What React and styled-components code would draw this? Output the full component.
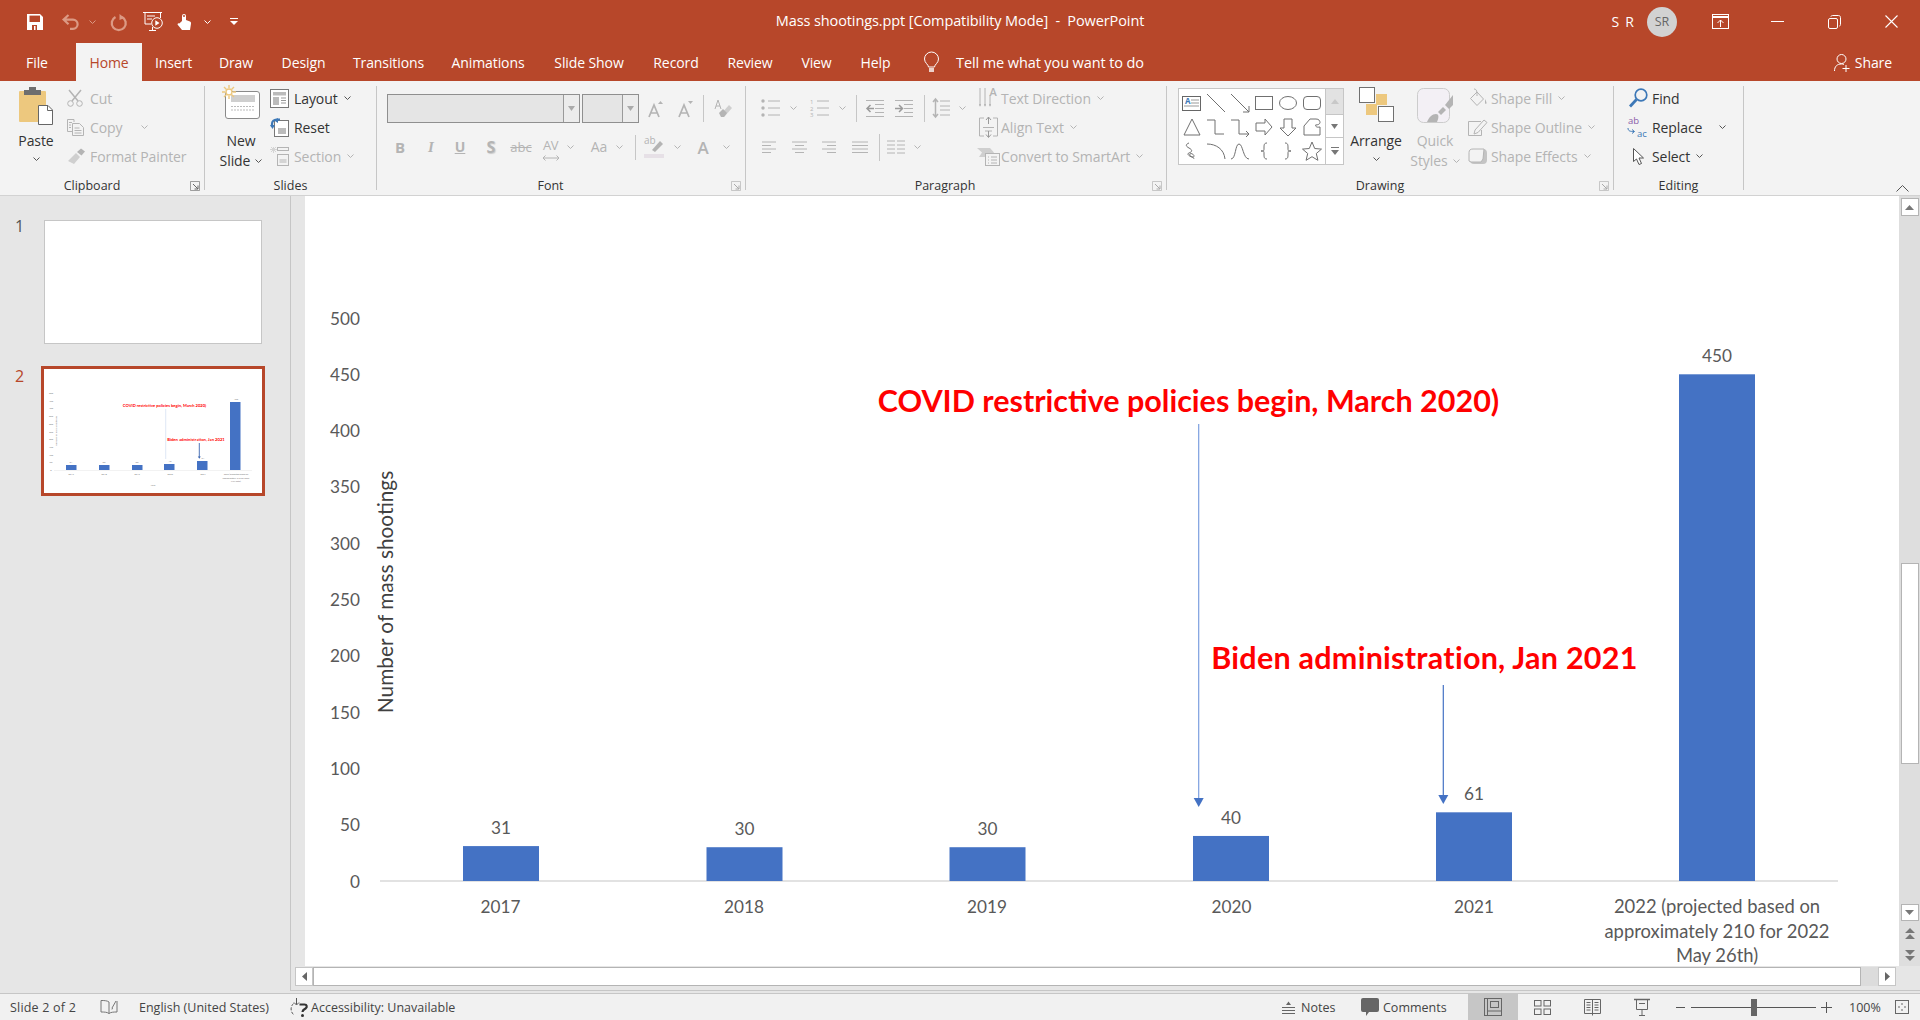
import React from 'react';
import styled, { createGlobalStyle } from 'styled-components';

const ORANGE = '#b7472a';
const UI = '"Open Sans", "Noto Sans", sans-serif';
const DIS = '#b4b4b4';

const Global = createGlobalStyle`
  html, body { margin: 0; padding: 0; background: #f3f3f3; }
  body { font-family: ${UI}; overflow: hidden; }
  * { box-sizing: border-box; }
`;

const Page = styled.div`
  width: 1920px; height: 1020px; display: flex; flex-direction: column; overflow: hidden;
`;

/* title bar */
const TitleBar = styled.div`
  height: 43px; background: ${ORANGE}; color: #fff;
  display: grid; grid-template-columns: 1fr auto 1fr; align-items: center;
`;
const Qat = styled.div`display: flex; align-items: center; padding-left: 19px; height: 40px;`;
const QatSlot = styled.div`
  width: ${p => p.$w}px; display: flex; justify-content: center; align-items: center;
`;
const DocTitle = styled.div`
  font-size: 14.5px; letter-spacing: -0.1px; white-space: pre; margin-top: -2px;
`;
const TitleRight = styled.div`display: flex; justify-content: flex-end; align-items: center; height: 40px;`;
const UserName = styled.span`font-size: 14px; letter-spacing: 1.2px; margin-right: 12px;`;
const Avatar = styled.div`
  width: 30px; height: 30px; border-radius: 50%; background: #d2d2d2; color: #666;
  font-size: 12.5px; display: flex; align-items: center; justify-content: center; margin-right: 15px;
`;
const WinBtn = styled.div`width: 57px; display: flex; justify-content: center; align-items: center;`;

/* tabs */
const TabBar = styled.div`
  height: 38px; background: ${ORANGE}; display: flex; align-items: stretch; color: #fff;
`;
const Tab = styled.div`
  width: ${p => p.$w}px; display: flex; align-items: center; justify-content: center;
  font-size: 14px; letter-spacing: -0.1px; padding-top: 1px; white-space: nowrap;
  ${p => p.$active && `background: #f3f3f3; color: ${ORANGE};`}
`;
const TellMe = styled.div`
  display: flex; align-items: center; font-size: 14.5px; letter-spacing: -0.1px; margin-left: 19px; gap: 17px; padding-top: 1px;
`;
const Share = styled.div`
  margin-left: auto; margin-right: 28px; display: flex; align-items: center; gap: 5px;
  font-size: 14px; letter-spacing: -0.1px; padding-top: 1px;
`;

/* ribbon */
const Ribbon = styled.div`
  height: 115px; background: #f3f3f3; display: flex; border-bottom: 1px solid #d2d2d2; position: relative;
`;
const Group = styled.div`
  width: ${p => p.$w}px; display: flex; flex-direction: column; position: relative; flex: none;
`;
const GroupBody = styled.div`
  height: 94px; display: flex; align-items: flex-start;
  padding-top: ${p => p.$pt ?? 2.5}px;
`;
const GroupFooter = styled.div`
  height: 20px; display: flex; align-items: center; justify-content: center; position: relative;
  font-size: 12.5px; color: #333; padding-right: ${p => p.$pr || 0}px;
`;
const Launcher = styled.div`position: absolute; right: 4px; top: 6px; display: flex;`;
const RibbonSep = styled.div`width: 1px; height: 104px; margin-top: 5px; background: #c6c6c6; flex: none;`;

const BigBtn = styled.div`
  width: ${p => p.$w}px; margin-left: ${p => p.$ml || 0}px; display: flex; flex-direction: column;
  align-items: center; font-size: 14px; letter-spacing: -0.08px; line-height: 20px;
  color: ${p => p.$off ? DIS : '#333'}; flex: none; white-space: nowrap;
`;
const BigIcon = styled.div`
  height: 41px; display: flex; align-items: flex-start; justify-content: center; padding-top: ${p => p.$pt ?? 4}px;
  margin-bottom: 6px;
`;
const BigCaret = styled.div`height: 16px; display: flex; align-items: center;`;
const BigLine = styled.div`display: flex; align-items: center; gap: 5px;`;

const SmallCol = styled.div`
  display: flex; flex-direction: column; margin-left: ${p => p.$ml || 0}px; flex: none;
`;
const SmallBtn = styled.div`
  height: 29px; display: flex; align-items: center; font-size: 14px; letter-spacing: -0.08px;
  color: ${p => p.$off ? DIS : '#333'}; white-space: nowrap;
`;
const SmallIcon = styled.div`
  width: ${p => p.$w}px; display: flex; justify-content: ${p => p.$left ? 'flex-start' : 'center'}; align-items: center; flex: none;
  padding-right: ${p => p.$pr || 0}px;
`;
const CaretGap = styled.span`display: inline-flex; margin-left: ${p => p.$ml ?? 6}px;`;

const FontCol = styled.div`display: flex; flex-direction: column;`;
const Row = styled.div`
  display: flex; align-items: center; height: ${p => p.$h}px; margin-top: ${p => p.$mt || 0}px;
`;
const Combo = styled.div`
  width: ${p => p.$w}px; height: 29px; margin-left: ${p => p.$ml || 0}px; flex: none;
  background: #e5e5e5; border: 1px solid #8f8f8f; display: flex; justify-content: flex-end;
`;
const ComboArrow = styled.div`
  width: 16px; border-left: 1px solid #9a9a9a; background: #ececec; display: flex; align-items: center; justify-content: center;
`;
const Slot = styled.div`
  width: 20px; flex: none; display: flex; justify-content: center; align-items: center;
  margin-left: ${p => p.$ml}px; color: ${DIS};
`;
const Glyph = styled.span`
  font-family: ${p => p.$font || UI}; font-size: ${p => p.$size || 14}px; font-weight: ${p => p.$weight || 400};
  font-style: ${p => p.$italic ? 'italic' : 'normal'}; line-height: 1;
  text-decoration: ${p => p.$deco || 'none'}; white-space: nowrap; letter-spacing: ${p => p.$ls || 0}px;
  text-shadow: ${p => p.$shadow ? '1px 1px 1px #ccc' : 'none'};
`;
const RowSep = styled.div`width: 1px; height: ${p => p.$h || 27}px; background: #c6c6c6;`;

const Gallery = styled.div`
  width: 166px; height: 77px; margin: 4.5px 0 0 11px; display: flex; flex: none;
  border: 1px solid #c6c6c6; background: #fff;
`;
const ShapeGrid = styled.div`
  width: 147px; padding: 2px 0 0 1px; display: grid; grid-template-columns: repeat(6, 24px); grid-auto-rows: 24px;
  align-items: center; justify-items: center;
`;
const GalleryScroll = styled.div`
  width: 18px; border-left: 1px solid #c6c6c6; display: flex; flex-direction: column;
`;
const GalleryBtn = styled.div`
  flex: ${p => p.$f}; display: flex; align-items: center; justify-content: center;
  background: ${p => p.$off ? '#e2e2e2' : '#fff'}; border-bottom: ${p => p.$last ? 0 : 1}px solid #c6c6c6;
`;
const Collapse = styled.div`position: absolute; right: 11px; bottom: 3px; display: flex;`;

/* work area */
const Work = styled.div`height: 797px; display: flex; background: #e6e6e6;`;
const Thumbs = styled.div`
  width: 291px; border-right: 1px solid #c6c6c6; flex: none; padding-top: 24px; display: flex; flex-direction: column; height: 795px;
`;
const ThumbRow = styled.div`
  display: flex; align-items: flex-start; margin-top: ${p => p.$mt || 0}px;
`;
const ThumbNum = styled.div`
  width: ${p => p.$w}px; padding-left: 15px; font-size: 16px; line-height: 16px; flex: none;
  color: ${p => p.$on ? ORANGE : '#555'}; margin-top: ${p => p.$top}px;
`;
const ThumbPlain = styled.div`width: 218px; height: 124px; background: #fff; border: 1px solid #c6c6c6;`;
const ThumbSel = styled.div`
  width: 224px; height: 130px; border: 3px solid ${ORANGE}; background: #fff; display: flex;
`;
const RightCol = styled.div`flex: 1; display: flex; flex-direction: column; min-width: 0;`;
const CanvasRow = styled.div`height: 770px; display: flex;`;
const Splitter = styled.div`width: 14px; flex: none;`;
const Canvas = styled.div`flex: 1; background: #fff; display: flex; min-width: 0;`;
const ChartSvg = styled.svg`width: 1594px; height: 770px; display: block;`;
const ChartText = styled.text`
  font-family: Lato, "Open Sans", sans-serif; font-size: ${p => p.$size || 17.2}px; fill: ${p => p.$fill || '#595959'};
  font-weight: ${p => p.$weight || 400}; text-anchor: ${p => p.$anchor || 'middle'}; dominant-baseline: central;
  letter-spacing: ${p => p.$ls || 0}px;
`;
const VScroll = styled.div`
  width: 21px; flex: none; background: #dedede; display: flex; flex-direction: column; align-items: center; padding-top: 2px;
`;
const VBtn = styled.div`
  width: 18px; height: ${p => p.$h || 18}px; background: #fff; border: 1px solid #b4b4b4; margin-top: ${p => p.$mt || 0}px;
  display: flex; align-items: center; justify-content: center; flex: none;
`;
const VNav = styled.div`height: 22px; margin-top: ${p => p.$mt || 0}px; display: flex; align-items: center; justify-content: center;`;
const HRow = styled.div`
  height: 25px; padding: 1px 24px 0 4px; border-bottom: 1px solid #c6c6c6; display: flex; align-items: flex-start; flex: none;
`;
const HBtn = styled.div`
  width: 18px; height: 19px; background: #fff; border: 1px solid #c6c6c6; display: flex; align-items: center; justify-content: center; flex: none;
`;
const HThumb = styled.div`flex: 1; height: 19px; background: #fff; border: 1px solid #b4b4b4;`;
const HTrack = styled.div`width: 17px; height: 19px; background: #dcdcdc; flex: none;`;

/* status bar */
const Status = styled.div`
  height: 27px; border-top: 1px solid #c6c6c6; background: #f1f1f1; display: flex; align-items: center;
  justify-content: space-between; font-size: 12.5px; color: #444; white-space: nowrap;
`;
const StatusSide = styled.div`display: flex; align-items: center; height: 100%;`;
const StatusText = styled.span`
  width: ${p => p.$w}px; margin-left: ${p => p.$ml || 0}px; flex: none; display: inline-block;
  letter-spacing: ${p => p.$ls || 0}px;
`;
const StatusIcon = styled.span`
  width: ${p => p.$w}px; margin-left: ${p => p.$ml || 0}px; flex: none; display: inline-flex; justify-content: center; align-items: center;
`;
const ViewBtn = styled.div`
  width: ${p => p.$w || 50}px; margin-left: ${p => p.$ml || 0}px; height: 100%; display: flex; align-items: center; justify-content: center;
  flex: none; background: ${p => p.$on ? '#c6c6c6' : 'transparent'};
`;
const ZoomTrack = styled.div`
  width: 125px; height: 1px; background: #555; margin-left: 6px; position: relative; flex: none;
`;
const ZoomThumb = styled.div`
  position: absolute; left: 60px; top: -8px; width: 6px; height: 17px; background: #666;
`;

/* icon base */
const Svg = styled.svg`display: block; flex: none; overflow: visible;`;
const I = ({ w, h = w, vb, children, ...r }) => (
  <Svg width={w} height={h} viewBox={vb || `0 0 ${w} ${h}`} fill="none" {...r}>{children}</Svg>
);
const Caret = ({ c = '#555' }) => (
  <I w={7} h={4}><path d="M.5.5 3.5 3.5 6.5.5" stroke={c} /></I>
);
const Tri = ({ c = '#777', up, w = 8 }) => (
  <I w={w} h={5}><path d={up ? `M0 5 ${w / 2} 0 ${w} 5z` : `M0 0 ${w / 2} 5 ${w} 0z`} fill={c} /></I>
);
const Launch = ({ c = '#777' }) => (
  <I w={10} h={10}>
    <path d="M.5 9.5V.5h9v9z" stroke={c} opacity=".6" />
    <path d="M3 3 8 8M8 4.5V8H4.5" stroke={c} />
  </I>
);

const Placed = ({ from, items }) => items.map(([c, node], i) => (
  <Slot key={i} $ml={i ? c - items[i - 1][0] - 20 : c - from - 10}>{node}</Slot>
));

/* title bar icons */
const SaveIc = () => (
  <I w={16}>
    <path d="M0 0h13l3 3v13H0z" fill="#fff" />
    <rect x="2.5" y="1.6" width="10.5" height="6.4" fill={ORANGE} />
    <rect x="5" y="11" width="5" height="5" fill={ORANGE} />
    <rect x="7" y="12" width="1.5" height="4" fill="#fff" />
  </I>
);
const UndoIc = () => (
  <I w={17} h={15}>
    <path d="M6.5 1 1.6 5.6l4.9 4.6M2 5.6h9a4.6 4.6 0 0 1 0 9.2H8" stroke="#dc9a84" strokeWidth="2.2" />
  </I>
);
const RedoIc = () => (
  <I w={17} h={16}>
    <path d="M5.5 3a7 7 0 1 0 6.5 0" stroke="#dc9a84" strokeWidth="2.3" />
    <path d="M9.5 0v6l5-2z" fill="#dc9a84" />
  </I>
);
const PresentIc = () => (
  <I w={20} h={19}>
    <path d="M0 .5h19M2 .5V12h6M4 4h8M4 7h5" stroke="#fff" />
    <path d="M17.5 1v5" stroke="#fff" />
    <circle cx="14" cy="11" r="5.3" stroke="#fff" fill={ORANGE} />
    <path d="M12.3 8.3v5.4l4.2-2.7z" fill="#fff" />
    <path d="M6 18.5h7M9.5 15v3" stroke="#fff" />
  </I>
);
const TouchIc = () => (
  <I w={15} h={17}>
    <path d="M5 8V3a2 2 0 0 1 4 0v4l4 1.5c1 .5 1.2 1.2 1 2.2L13 17H5L.7 11.8c-.5-.8.6-2 1.6-1.2z" fill="#fff" />
    <circle cx="7" cy="3" r="1" fill={ORANGE} />
  </I>
);
const CustomIc = () => (
  <I w={8} h={7}><path d="M0 .5h8" stroke="#fff" /><path d="M0 3h8L4 7z" fill="#fff" /></I>
);
const RibbonOptIc = () => (
  <I w={17} h={15}>
    <rect x=".5" y=".5" width="16" height="14" stroke="#fff" />
    <path d="M1 3h15" stroke="#fff" strokeWidth="2" />
    <path d="M8.5 13V6M5.5 9l3-3 3 3" stroke="#fff" />
  </I>
);
const MinIc = () => <I w={13} h={1}><path d="M0 .5h13" stroke="#fff" /></I>;
const RestoreIc = () => (
  <I w={13} h={14}>
    <rect x=".5" y="3.5" width="9" height="10" rx="1.5" stroke="#fff" />
    <path d="M3 1.7C3 1 3.5.5 4.5.5h6c1.2 0 2 .8 2 2v7c0 1-.5 1.5-1.2 1.5" stroke="#fff" />
  </I>
);
const CloseIc = () => <I w={13}><path d="M.5.5l12 12M12.5.5l-12 12" stroke="#fff" strokeWidth="1.1" /></I>;
const BulbIc = () => (
  <I w={15} h={21}>
    <path d="M4.5 15c0-2.5-4-4-4-8a7 7 0 0 1 14 0c0 4-4 5.500-4 8z" stroke="#fff" />
    <path d="M5 17h5M5 19h5" stroke="#fff" strokeWidth="1.3" />
  </I>
);
const ShareIc = () => (
  <I w={16} h={18}>
    <circle cx="7.500" cy="5" r="4.500" stroke="#fff" />
    <path d="M.5 17c0-4.500 2.500-7 7-7 1 0 1.700.1 2.500.4" stroke="#fff" />
    <path d="M12 11v7M8.500 14.500h7" stroke="#fff" />
  </I>
);

/* clipboard */
const PasteIc = () => (
  <I w={34} h={38}>
    <rect y="4" width="27" height="31" rx="1" fill="#edc87e" />
    <path d="M5 8V3h5V0h7v3h5v5z" fill="#6e6e6e" />
    <path d="M19.500 18.500H29l4.500 4.500v14.500h-14z" fill="#fff" stroke="#666" />
    <path d="M28.500 18.500V23.500h5" stroke="#666" />
  </I>
);
const CutIc = () => (
  <I w={16} h={17}>
    <circle cx="3.500" cy="13.500" r="2.800" stroke={DIS} />
    <circle cx="12.500" cy="13.500" r="2.800" stroke={DIS} />
    <path d="M2 0l9 11M14 0 5 11" stroke={DIS} strokeWidth="1.500" />
  </I>
);
const CopyIc = () => (
  <I w={17} h={17}>
    <path d="M7 3V.5H.5v12H5" stroke={DIS} />
    <path d="M5.500 4.500h7l4 4v8h-11zM2 3.500h3M2 6h2M2 8.500h2M7.500 9h5M7.500 11.500h7M7.500 14h7" stroke={DIS} />
  </I>
);
const PainterIc = () => (
  <I w={19} h={16}>
    <path d="M1 13 9 5l4 4-6 7z" fill="#cfcfcf" />
    <path d="M10 4l4-3.500 4 3-3.500 4z" fill={DIS} />
  </I>
);
/* slides */
const NewSlideIc = () => (
  <I w={38} h={34}>
    <rect x="3.500" y="6.500" width="34" height="27" rx="2.500" fill="#fff" stroke="#8a8a8a" />
    <rect x="9" y="10" width="24" height="7" fill="#cfcfcf" />
    <path d="M9 21.500h24M9 25h24" stroke="#bbb" strokeDasharray="2 1" />
    <g stroke="#edc87e" strokeWidth="1.400">
      <circle cx="7" cy="7" r="3" fill="#fff" />
      <path d="M7 0v3M7 11v3M0 7h3M11 7h3M2 2l2.500 2.500M9.500 9.500 12 12M12 2 9.500 4.500M2 12l2.500-2.500" />
    </g>
  </I>
);
const LayoutIc = () => (
  <I w={19} h={19}>
    <rect x=".5" y=".5" width="18" height="18" stroke="#777" fill="#fff" />
    <rect x="3" y="3" width="13" height="3.500" fill="#bbb" />
    <rect x="3" y="8" width="6" height="8" fill="#bbb" />
    <path d="M11 9h5M11 11.500h5M11 14h5" stroke="#999" />
  </I>
);
const ResetIc = () => (
  <I w={19} h={19}>
    <rect x="4.500" y="2.500" width="14" height="16" stroke="#777" fill="#fff" />
    <rect x="8" y="10" width="8" height="6" fill="#bbb" />
    <path d="M10 1.500H6.500A4.500 4.500 0 0 0 2 6v3" stroke="#3d78b7" strokeWidth="2.200" />
    <path d="M8 0v5l-4-2.500zM0 7h5L2.500 11z" fill="#3d78b7" />
  </I>
);
const SectionIc = () => (
  <I w={20} h={19}>
    <path d="M0 2.500h7M3.500 0v6M1 0l5 5M6 0 1 5" stroke="#d4d4d4" />
    <rect x="7.500" y=".5" width="11" height="3" stroke={DIS} />
    <rect x="7.500" y="7.500" width="11" height="11" stroke={DIS} />
    <rect x="9.500" y="12" width="7" height="4" fill="#d4d4d4" />
  </I>
);
/* font */
const GrowIc = ({ up }) => (
  <I w={16} h={18}>
    <path d={up ? 'M10 4l2.500-3L15 4z' : 'M10 1l2.500 3L15 1z'} fill={DIS} />
    <path d="M1 17 6 5l5 12M3 13h6" stroke={DIS} strokeWidth="1.700" />
  </I>
);
const EraserIc = () => (
  <I w={18} h={19}>
    <path d="M1 10 4 1l3 9M2 7h4" stroke={DIS} />
    <path d="M7 15l8-9 3 3-7.500 8.500H7z" fill="#cfcfcf" />
    <path d="M5 14l4-4 4 4-3 4H7z" fill={DIS} />
  </I>
);
const AvIc = () => (
  <I w={16} h={6}><path d="M0 3h16M2.500.5 0 3l2.500 2.500M13.500.5 16 3l-2.500 2.500" stroke={DIS} /></I>
);
const HiliteIc = () => (
  <I w={20} h={22}>
    <text x="0" y="8" fontFamily="Open Sans" fontSize="10" fill={DIS}>ab</text>
    <path d="M8 14 16 5l3 3-8 8z" fill={DIS} />
    <rect y="18" width="20" height="4" fill="#e6e0e6" />
  </I>
);
/* paragraph */
const BulletsIc = () => (
  <I w={19} h={18}>
    <circle cx="2" cy="2" r="1.700" fill={DIS} /><circle cx="2" cy="9" r="1.700" fill={DIS} /><circle cx="2" cy="16" r="1.700" fill={DIS} />
    <path d="M7 2h12M7 9h12M7 16h12" stroke={DIS} />
  </I>
);
const NumsIc = () => (
  <I w={19} h={18}>
    <text x="0" y="5" fontFamily="Open Sans" fontSize="6" fill={DIS}>1</text>
    <text x="0" y="12" fontFamily="Open Sans" fontSize="6" fill={DIS}>2</text>
    <text x="0" y="18" fontFamily="Open Sans" fontSize="6" fill={DIS}>3</text>
    <path d="M7 2h12M7 9h12M7 16h12" stroke={DIS} />
  </I>
);
const IndentIc = ({ inc }) => (
  <I w={18} h={17}>
    <path d="M0 .5h18M9 4.500h9M9 8.500h9M9 12.500h9M0 16.500h18" stroke={DIS} />
    <path d={inc ? 'M0 8.500h7M4 5l3.500 3.500L4 12' : 'M8 8.500H1M4.500 5 1 8.500 4.500 12'} stroke="#9a9a9a" strokeWidth="1.500" />
  </I>
);
const SpacingIc = () => (
  <I w={18} h={20}>
    <path d="M3.500 1v18M1 4l2.500-3L6 4M1 16l2.500 3L6 16" stroke={DIS} strokeWidth="1.500" />
    <path d="M8 3h10M8 8h10M8 12h10M8 17h10" stroke={DIS} />
  </I>
);
const AlignIc = ({ kind }) => {
  const d = {
    l: 'M0 1h14M0 4.500h9M0 8h14M0 11.500h9',
    c: 'M0 1h15M3 4.500h9M0 8h15M3 11.500h9',
    r: 'M0 1h14M5 4.500h9M0 8h14M5 11.500h9',
    j: 'M0 1h16M0 4.500h16M0 8h16M0 11.500h16',
  }[kind];
  return <I w={16} h={13}><path d={d} stroke={DIS} /></I>;
};
const ColumnsIc = () => (
  <I w={18} h={15}><path d="M0 1h8M10 1h8M0 5h8M10 5h8M0 9h8M10 9h8M0 13h8M10 13h8" stroke={DIS} /></I>
);
const TextDirIc = () => (
  <I w={19} h={22}>
    <path d="M1 1v18M6 1v18M11 8v11" stroke={DIS} />
    <path d="M0 17l1 3 1-3zM5 17l1 3 1-3zM10 17l1 3 1-3z" fill={DIS} />
    <text x="10.500" y="9" fontFamily="Open Sans" fontSize="11" fontWeight="600" fill={DIS}>A</text>
  </I>
);
const AlignTextIc = () => (
  <I w={19} h={21}>
    <path d="M5 1H.5v18H5M14 1h4.500v18H14M4 10.500h11M6 14h7" stroke={DIS} />
    <path d="M9.500 0v7M7 3l2.500-3L12 3M9.500 14v6M7 17.500l2.500 3 2.500-3" stroke="#9a9a9a" />
  </I>
);
const SmartIc = () => (
  <I w={23} h={19}>
    <path d="M0 1h13l4 4.500L13 10H2l3-4.500z" fill="#cfcfcf" />
    <rect x="8.500" y="6.500" width="14" height="12" fill="#f3f3f3" stroke={DIS} />
    <path d="M11 10h1M14 10h6M11 13h1M14 13h6M11 16h1M14 16h6" stroke={DIS} />
  </I>
);
/* drawing */
const S = '#707070';
const shapes = [
  <I w={20} h={20} key="a"><rect x=".5" y="3.500" width="18" height="14" stroke="#666" /><text x="3" y="11" fontFamily="Open Sans" fontWeight="700" fontSize="8" fill="#3d78b7">A</text><path d="M9 7h8M9 10h8M2 13h15" stroke="#999" /></I>,
  <I w={20} h={20} key="b"><path d="M1 1l18 18" stroke={S} /></I>,
  <I w={20} h={20} key="c"><path d="M1 1l18 18M13 19h6v-6" stroke={S} /></I>,
  <I w={20} h={20} key="d"><rect x="1.500" y="3.500" width="17" height="13" stroke={S} /></I>,
  <I w={20} h={20} key="e"><ellipse cx="10" cy="10" rx="8.500" ry="6.500" stroke={S} /></I>,
  <I w={20} h={20} key="f"><rect x="1.500" y="3.500" width="17" height="13" rx="3.500" stroke={S} /></I>,
  <I w={20} h={20} key="g"><path d="M10 2 18 18H2z" stroke={S} /></I>,
  <I w={20} h={20} key="h"><path d="M1 3h8v14h9" stroke={S} /></I>,
  <I w={20} h={20} key="i"><path d="M1 3h8v14h10M16 14l3 3-3 3" stroke={S} /></I>,
  <I w={20} h={20} key="j"><path d="M2 6h9V2l7 8-7 8v-4H2z" stroke={S} /></I>,
  <I w={20} h={20} key="k"><path d="M6 2h8v9h4l-8 8-8-8h4z" stroke={S} /></I>,
  <I w={20} h={20} key="l"><path d="M2 18V9l6-7h6c3 0 4 2 4 3.500S16 8 13.500 8c.5 2 1 2.500 4.500 2v8z" stroke={S} /></I>,
  <I w={20} h={20} key="m"><path d="M7 2c-3 1-4 3 0 5s3 4 0 5 1 4 4 4-1-5-3-3 5 4 4 5" stroke={S} /></I>,
  <I w={20} h={20} key="n"><path d="M1 3c9 0 17 5 18 15" stroke={S} /></I>,
  <I w={20} h={20} key="o"><path d="M1 18c5 0 4-15 8-15s4 15 10 15" stroke={S} /></I>,
  <I w={20} h={20} key="p"><path d="M13 2c-3 0-3 2-3 5s0 3-3 3c3 0 3 0 3 3s0 5 3 5" stroke={S} /></I>,
  <I w={20} h={20} key="q"><path d="M7 2c3 0 3 2 3 5s0 3 3 3c-3 0-3 0-3 3s0 5-3 5" stroke={S} /></I>,
  <I w={20} h={20} key="r"><path d="M10 1l2.700 6.500 6.800.6-5.200 4.400 1.600 6.800-5.900-3.600-5.900 3.600 1.600-6.800L.5 8.100l6.800-.6z" stroke={S} /></I>,
];
const ArrangeIc = () => (
  <I w={35} h={35}>
    <rect x="17" y="7" width="11" height="11" fill="#edc87e" />
    <rect x="7" y="17" width="11" height="11" fill="#edc87e" />
    <rect x=".5" y=".5" width="15" height="15" fill="#fff" stroke="#707070" />
    <rect x="19.500" y="19.500" width="15" height="15" fill="#fff" stroke="#707070" />
  </I>
);
const QuickIc = () => (
  <I w={37} h={35}>
    <rect x=".5" y=".5" width="32" height="34" rx="6" fill="#f3f0f5" stroke="#cccccc" />
    <path d="M10 34c2-5 5-8 9-8 3 0 3 3 1 8z" fill={DIS} />
    <path d="M21 24l5-5 3 3-5 5z" fill={DIS} />
    <path d="M28 17l8-10v10l-4 4z" fill={DIS} />
  </I>
);
const FillIc = () => (
  <I w={18} h={19}>
    <path d="M8 3 1.500 9.500l6.500 7 6.500-6.500zM5 0c3 0 3 3 3 7" stroke={DIS} />
    <path d="M16 10c1 2 1.500 3 1.500 4s-1 1.500-1.500 0" fill={DIS} />
  </I>
);
const OutlineIc = () => (
  <I w={20} h={17}>
    <path d="M13 2.500H.5v14h13V11" stroke={DIS} />
    <path d="M7 11l9-10 3 2.500-9 10L6 15z" stroke={DIS} />
  </I>
);
const EffectsIc = () => (
  <I w={19} h={17}>
    <rect x="2" y="1" width="17" height="15" rx="4" fill="#c4c4c4" />
    <path d="M1 13V4.500C1 2 2.500 1 5 1h11l-1 10-2 3H3z" fill="#f3f3f3" stroke={DIS} />
  </I>
);
/* editing */
const FindIc = () => (
  <I w={19} h={20}>
    <circle cx="12" cy="7" r="5.800" stroke="#3d78b7" strokeWidth="1.700" />
    <path d="M7.500 11.500 1 18.500" stroke="#3d78b7" strokeWidth="2.800" />
  </I>
);
const ReplaceIc = () => (
  <I w={20} h={20}>
    <text x="0" y="7" fontFamily="Open Sans" fontSize="9.500" fill="#8a5aa8">ab</text>
    <text x="9" y="20" fontFamily="Open Sans" fontSize="9.500" fill="#3d78b7">ac</text>
    <path d="M0 11c0 3 2 3.500 6 3.500M4 12.500l2.500 2-2.500 2" stroke="#3d78b7" />
  </I>
);
const SelectIc = () => (
  <I w={11} h={17}><path d="M.5.5v13l3-2.500 2.500 5.500 2.500-1-2.500-5.500h4.500z" stroke="#555" fill="#fff" /></I>
);

/* status */
const CheckBookIc = () => (
  <I w={18} h={16}>
    <path d="M9 3C7 1.500 4 1.500 1 1.500V13c3 0 6 0 8 1.500 2-1.500 5-1.500 8-1.500V2M9 3v11.500" stroke="#777" />
    <path d="M12 9l4-7M11.500 10l1.500-.5" stroke="#777" />
  </I>
);
const AccessIc = () => (
  <I w={20} h={19}>
    <path d="M4.500 5.500a7.500 7.500 0 0 0 0 11" stroke="#555" strokeDasharray="3 1.500" />
    <path d="M7.500 0v6.500M5 4.500l2.500 2.500L10 4.500" stroke="#555" />
    <path d="M10.500 6.500h5c2.500 0 3 2.500 1 4-1.500 1-3 1.500-3 3.500" stroke="#333" strokeWidth="2.200" />
    <circle cx="13.500" cy="17.500" r="1.500" fill="#333" />
  </I>
);
const NotesIc = () => (
  <I w={13} h={13}><path d="M4 4l2.500-3.500L9 4z" fill="#666" /><path d="M0 6.500h13M0 9.500h13M0 12.500h13" stroke="#666" /></I>
);
const CommentIc = () => (
  <I w={18} h={18}>
    <path d="M2 0h14a2 2 0 0 1 2 2v10a2 2 0 0 1-2 2H8l-3 4v-4H2a2 2 0 0 1-2-2V2a2 2 0 0 1 2-2z" fill="#666" />
  </I>
);
const NormalIc = () => (
  <I w={18} h={18}>
    <rect x=".5" y=".5" width="17" height="17" stroke="#666" />
    <path d="M3.500 1v16" stroke="#666" />
    <rect x="6.500" y="3.500" width="8" height="6" stroke="#666" />
    <path d="M4 13h13" stroke="#666" />
  </I>
);
const SorterIc = () => (
  <I w={17} h={15}>
    <rect x=".5" y=".5" width="6.500" height="5.500" stroke="#666" /><rect x="10" y=".5" width="6.500" height="5.500" stroke="#666" />
    <rect x=".5" y="9" width="6.500" height="5.500" stroke="#666" /><rect x="10" y="9" width="6.500" height="5.500" stroke="#666" />
  </I>
);
const ReadIc = () => (
  <I w={17} h={17}>
    <path d="M.5.5h16v14H.5zM8.500.5v16" stroke="#666" />
    <path d="M2.500 3.500h4M2.500 6h4M2.500 8.500h4M2.500 11h4M10.500 3.500h4M10.500 6h4M10.500 8.500h4M10.500 11h4" stroke="#666" />
  </I>
);
const ShowIc = () => (
  <I w={16} h={17}>
    <path d="M0 .5h16" stroke="#666" strokeWidth="1.500" />
    <path d="M2.500 1v9.500h11V1M5 4.500h6M8 10.500V16M5 16.500h6" stroke="#666" />
  </I>
);
const FitIc = () => (
  <I w={14} h={14}>
    <rect x=".5" y=".5" width="13" height="13" stroke="#666" />
    <path d="M7 3v2M7 9v2M3 7h2M9 7h2" stroke="#666" />
  </I>
);
const NavIc = ({ down }) => (
  <I w={10} h={11}>
    {down
      ? <path d="M0 0h10L5 5zM0 6h10l-5 5z" fill="#777" />
      : <path d="M5 0l5 5H0zM5 6l5 5H0z" fill="#777" />}
  </I>
);

/* thumbnail + chart data */
const bars = [
  { v: 31, x: 463, l: '2017' }, { v: 30, x: 706.5, l: '2018' }, { v: 30, x: 949.5, l: '2019' },
  { v: 40, x: 1193, l: '2020', lx: 38.5 }, { v: 61, x: 1436, l: '2021', lx: 38 }, { v: 450, x: 1679 },
];
const BASE = 881;
const SCALE = 1.126;
const ticks = [500, 450, 400, 350, 300, 250, 200, 150, 100, 50, 0];

const MiniText = styled.text`
  font-family: Lato, sans-serif; font-size: ${p => p.$s}px; fill: ${p => p.$c}; text-anchor: middle; dominant-baseline: central;
  font-weight: ${p => p.$w || 400};
`;
const MiniSlide = () => (
  <Svg width="218" height="124" viewBox="44 369 218 124">
    {ticks.map((t, i) => <MiniText key={t} x="51" y={393.500 + i * 7.700} $s="2.400" $c="#777">{t}</MiniText>)}
    <MiniText x="0" y="0" $s="2.600" $c="#777" transform="translate(56 431) rotate(-90)">Number of mass shootings</MiniText>
    <path d="M54 470.500h198" stroke="#e5e5e5" strokeWidth=".5" />
    {[[66, 5], [99, 5], [132, 5], [164, 6], [197, 9], [230, 68]].map(([x, h]) => (
      <rect key={x} x={x} y={470 - h} width="10.500" height={h} fill="#4472c4" />
    ))}
    {['31', '30', '30', '40', '61', '450'].map((t, i) => (
      <MiniText key={i} x={71 + i * 33} y={[462.500, 462.500, 462.500, 461, 458, 399][i]} $s="2.400" $c="#777">{t}</MiniText>
    ))}
    {['2017', '2018', '2019', '2020', '2021'].map((t, i) => (
      <MiniText key={t} x={71 + i * 33} y="474" $s="2.400" $c="#777">{t}</MiniText>
    ))}
    <MiniText x="236" y="474" $s="2.200" $c="#777">2022 (projected based on</MiniText>
    <MiniText x="236" y="477.500" $s="2.200" $c="#777">approximately 210 for 2022</MiniText>
    <MiniText x="236" y="481" $s="2.200" $c="#777">May 26th)</MiniText>
    <MiniText x="153" y="484.500" $s="2.600" $c="#777">Year</MiniText>
    <MiniText x="164.500" y="405" $s="4.100" $c="#ff0000" $w="700">COVID restrictive policies begin, March 2020)</MiniText>
    <MiniText x="196" y="439.500" $s="4.200" $c="#ff0000" $w="700">Biden administration, Jan 2021</MiniText>
    <path d="M165.700 409v50" stroke="#c9d6ee" strokeWidth=".6" />
    <path d="M199.300 443v14" stroke="#3c66b0" strokeWidth=".9" />
    <path d="M197.800 456.500h3l-1.500 2.200z" fill="#3c66b0" />
  </Svg>
);

const Chart = () => (
  <ChartSvg viewBox="305 196 1594 770">
    {ticks.map(t => (
      <ChartText key={t} x="360" y={BASE - t * SCALE} $anchor="end">{t}</ChartText>
    ))}
    <ChartText $size={20.800} $fill="#404040" transform="translate(384.500 592) rotate(-90)">Number of mass shootings</ChartText>
    <path d="M380 881h1458" stroke="#d9d9d9" strokeWidth="1.500" />
    {bars.map(b => {
      const h = b.v * SCALE;
      return (
        <g key={b.x}>
          <rect x={b.x} y={BASE - h} width="76" height={h} fill="#4472c4" />
          <ChartText x={b.x + 38} y={BASE - h - 18.500}>{b.v}</ChartText>
          {b.l && <ChartText x={b.x + (b.lx || 37.500)} y="906">{b.l}</ChartText>}
        </g>
      );
    })}
    <ChartText x="1717" y="906" $size={18.400}>2022 (projected based on</ChartText>
    <ChartText x="1717" y="931" $size={18.400}>approximately 210 for 2022</ChartText>
    <ChartText x="1717" y="955" $size={18.400}>May 26th)</ChartText>
    <ChartText x="1188.500" y="400" $size={30.500} $weight={700} $fill="#ff0000">COVID restrictive policies begin, March 2020)</ChartText>
    <ChartText x="1424.500" y="657" $size={30.500} $weight={700} $fill="#ff0000" $ls={0.25}>Biden administration, Jan 2021</ChartText>
    <path d="M1198.700 424v376" stroke="#7c9fdf" strokeWidth="1.200" />
    <path d="M1193.700 798h10l-5 9z" fill="#4472c4" />
    <path d="M1443.300 685v112" stroke="#4472c4" strokeWidth="1.200" />
    <path d="M1438.300 795h10l-5 9z" fill="#4472c4" />
  </ChartSvg>
);

const tabs = [
  ['Home', 66, true], ['Insert', 63], ['Draw', 62], ['Design', 73], ['Transitions', 97], ['Animations', 102],
  ['Slide Show', 100], ['Record', 74], ['Review', 74], ['View', 59], ['Help', 59],
];

export default function App() {
  return (
    <Page>
      <Global />
      <TitleBar>
        <Qat>
          <QatSlot $w={32}><SaveIc /></QatSlot>
          <QatSlot $w={39}><UndoIc /></QatSlot>
          <QatSlot $w={4}><Caret c="#dc9a84" /></QatSlot>
          <QatSlot $w={48}><RedoIc /></QatSlot>
          <QatSlot $w={22}><PresentIc /></QatSlot>
          <QatSlot $w={40}><TouchIc /></QatSlot>
          <QatSlot $w={6}><Caret c="#fff" /></QatSlot>
          <QatSlot $w={48}><CustomIc /></QatSlot>
        </Qat>
        <DocTitle>{'Mass shootings.ppt [Compatibility Mode]  -  PowerPoint'}</DocTitle>
        <TitleRight>
          <UserName>S R</UserName>
          <Avatar>SR</Avatar>
          <WinBtn><RibbonOptIc /></WinBtn>
          <WinBtn><MinIc /></WinBtn>
          <WinBtn><RestoreIc /></WinBtn>
          <WinBtn><CloseIc /></WinBtn>
        </TitleRight>
      </TitleBar>

      <TabBar>
        <Tab $w={74}>File</Tab>
        <Tab $w={2} />
        {tabs.map(([t, w, a]) => <Tab key={t} $w={w} $active={a}>{t}</Tab>)}
        <TellMe>
          <BulbIc />
          <span>Tell me what you want to do</span>
        </TellMe>
        <Share><ShareIc />Share</Share>
      </TabBar>

      <Ribbon>
        <Group $w={204}>
          <GroupBody>
            <BigBtn $w={44} $ml={14}>
              <BigIcon $pt={3}><PasteIc /></BigIcon>
              Paste
              <BigCaret><Caret /></BigCaret>
            </BigBtn>
            <SmallCol $ml={9}>
              <SmallBtn $off><SmallIcon $w={23} $left><CutIc /></SmallIcon>Cut</SmallBtn>
              <SmallBtn $off><SmallIcon $w={23} $left><CopyIc /></SmallIcon>Copy<CaretGap $ml={18}><Caret c={DIS} /></CaretGap></SmallBtn>
              <SmallBtn $off><SmallIcon $w={23} $left><PainterIc /></SmallIcon>Format Painter</SmallBtn>
            </SmallCol>
          </GroupBody>
          <GroupFooter $pr={20}>Clipboard<Launcher><Launch c="#666" /></Launcher></GroupFooter>
        </Group>
        <RibbonSep />
        <Group $w={171}>
          <GroupBody>
            <BigBtn $w={56} $ml={8}>
              <BigIcon $pt={1}><NewSlideIc /></BigIcon>
              New
              <BigLine>Slide <Caret /></BigLine>
            </BigBtn>
            <SmallCol $ml={1}>
              <SmallBtn><SmallIcon $w={24} $left><LayoutIc /></SmallIcon>Layout<CaretGap><Caret /></CaretGap></SmallBtn>
              <SmallBtn><SmallIcon $w={24} $left><ResetIc /></SmallIcon>Reset</SmallBtn>
              <SmallBtn $off><SmallIcon $w={24} $left><SectionIc /></SmallIcon>Section<CaretGap><Caret c={DIS} /></CaretGap></SmallBtn>
            </SmallCol>
          </GroupBody>
          <GroupFooter>Slides</GroupFooter>
        </Group>
        <RibbonSep />
        <Group $w={368}>
          <GroupBody $pt={13}>
            <FontCol>
              <Row $h={29}>
                <Combo $w={193} $ml={10}><ComboArrow><Tri c="#aaa" w={7} /></ComboArrow></Combo>
                <Combo $w={57} $ml={2}><ComboArrow><Tri c="#aaa" w={7} /></ComboArrow></Combo>
                <Placed from={639} items={[
                  [656, <GrowIc up />], [686, <GrowIc />], [703, <RowSep />], [723, <EraserIc />],
                ]} />
              </Row>
              <Row $h={30} $mt={9}>
                <Placed from={377} items={[
                  [400, <Glyph $weight={700} $size={15}>B</Glyph>],
                  [431, <Glyph $italic $size={15} $font='"Liberation Serif", serif' $weight={700}>I</Glyph>],
                  [460, <Glyph $deco="underline" $weight={700} $size={14}>U</Glyph>],
                  [491, <Glyph $weight={700} $size={16} $shadow>S</Glyph>],
                  [521, <Glyph $deco="line-through" $size={13}>abc</Glyph>],
                  [551, <div><Glyph $size={13} $ls={-0.5}>AV</Glyph><AvIc /></div>],
                  [570, <Caret c={DIS} />],
                  [599, <Glyph $size={14}>Aa</Glyph>],
                  [619, <Caret c={DIS} />],
                  [635, <RowSep $h={25} />],
                  [654, <HiliteIc />],
                  [677, <Caret c={DIS} />],
                  [703, <Glyph $size={17} $weight={600}>A</Glyph>],
                  [726, <Caret c={DIS} />],
                ]} />
              </Row>
            </FontCol>
          </GroupBody>
          <GroupFooter $pr={21}>Font<Launcher><Launch c="#aaa" /></Launcher></GroupFooter>
        </Group>
        <RibbonSep />
        <Group $w={420}>
          <GroupBody>
            <FontCol>
              <Row $h={30} $mt={9.500}>
                <Placed from={746} items={[
                  [770, <BulletsIc />], [793, <Caret c={DIS} />], [819, <NumsIc />], [842, <Caret c={DIS} />],
                  [856, <RowSep />], [875, <IndentIc />], [904, <IndentIc inc />], [924, <RowSep />],
                  [941, <SpacingIc />], [962, <Caret c={DIS} />],
                ]} />
              </Row>
              <Row $h={30} $mt={9}>
                <Placed from={746} items={[
                  [770, <AlignIc kind="l" />], [800, <AlignIc kind="c" />], [830, <AlignIc kind="r" />], [860, <AlignIc kind="j" />],
                  [879, <RowSep />], [896, <ColumnsIc />], [917, <Caret c={DIS} />],
                ]} />
              </Row>
            </FontCol>
            <SmallCol $ml={3}>
              <SmallBtn $off><SmallIcon $w={26}><TextDirIc /></SmallIcon>Text Direction<CaretGap><Caret c={DIS} /></CaretGap></SmallBtn>
              <SmallBtn $off><SmallIcon $w={26}><AlignTextIc /></SmallIcon>Align Text<CaretGap><Caret c={DIS} /></CaretGap></SmallBtn>
              <SmallBtn $off><SmallIcon $w={26}><SmartIc /></SmallIcon>Convert to SmartArt<CaretGap><Caret c={DIS} /></CaretGap></SmallBtn>
            </SmallCol>
          </GroupBody>
          <GroupFooter $pr={22}>Paragraph<Launcher><Launch c="#aaa" /></Launcher></GroupFooter>
        </Group>
        <RibbonSep />
        <Group $w={446}>
          <GroupBody>
            <Gallery>
              <ShapeGrid>{shapes}</ShapeGrid>
              <GalleryScroll>
                <GalleryBtn $f={26} $off><Tri c="#c8c8c8" w={8} up /></GalleryBtn>
                <GalleryBtn $f={24}><Tri c="#777" w={7} /></GalleryBtn>
                <GalleryBtn $f={27} $last><I w={8} h={8}><path d="M0 .5h8" stroke="#777" /><path d="M0 3h8L4 8z" fill="#777" /></I></GalleryBtn>
              </GalleryScroll>
            </Gallery>
            <BigBtn $w={60} $ml={2}>
              <BigIcon $pt={3}><ArrangeIc /></BigIcon>
              Arrange
              <BigCaret><Caret /></BigCaret>
            </BigBtn>
            <BigBtn $w={54} $ml={2} $off>
              <BigIcon $pt={4}><QuickIc /></BigIcon>
              Quick
              <BigLine>Styles <Caret c={DIS} /></BigLine>
            </BigBtn>
            <SmallCol $ml={4}>
              <SmallBtn $off><SmallIcon $w={25} $pr={2}><FillIc /></SmallIcon>Shape Fill<CaretGap><Caret c={DIS} /></CaretGap></SmallBtn>
              <SmallBtn $off><SmallIcon $w={25} $pr={2}><OutlineIc /></SmallIcon>Shape Outline<CaretGap><Caret c={DIS} /></CaretGap></SmallBtn>
              <SmallBtn $off><SmallIcon $w={25} $pr={2}><EffectsIc /></SmallIcon>Shape Effects<CaretGap><Caret c={DIS} /></CaretGap></SmallBtn>
            </SmallCol>
          </GroupBody>
          <GroupFooter $pr={20}>Drawing<Launcher><Launch c="#aaa" /></Launcher></GroupFooter>
        </Group>
        <RibbonSep />
        <Group $w={129}>
          <GroupBody>
            <SmallCol $ml={12}>
              <SmallBtn><SmallIcon $w={26} $pr={2}><FindIc /></SmallIcon>Find</SmallBtn>
              <SmallBtn><SmallIcon $w={26} $pr={2}><ReplaceIc /></SmallIcon>Replace<CaretGap $ml={17}><Caret /></CaretGap></SmallBtn>
              <SmallBtn><SmallIcon $w={26} $pr={2}><SelectIc /></SmallIcon>Select<CaretGap><Caret /></CaretGap></SmallBtn>
            </SmallCol>
          </GroupBody>
          <GroupFooter>Editing</GroupFooter>
        </Group>
        <RibbonSep />
        <Collapse><I w={13} h={7}><path d="M.5 6.500 6.500.5l6 6" stroke="#555" /></I></Collapse>
      </Ribbon>

      <Work>
        <Thumbs>
          <ThumbRow>
            <ThumbNum $w={44} $top={-2}>1</ThumbNum>
            <ThumbPlain />
          </ThumbRow>
          <ThumbRow $mt={22}>
            <ThumbNum $w={41} $top={2} $on>2</ThumbNum>
            <ThumbSel><MiniSlide /></ThumbSel>
          </ThumbRow>
        </Thumbs>
        <RightCol>
          <CanvasRow>
            <Splitter />
            <Canvas><Chart /></Canvas>
            <VScroll>
              <VBtn><Tri c="#777" w={9} up /></VBtn>
              <VBtn $h={201} $mt={347} />
              <VBtn $h={17} $mt={140}><Tri c="#777" w={9} /></VBtn>
              <VNav $mt={1}><NavIc /></VNav>
              <VNav><NavIc down /></VNav>
            </VScroll>
          </CanvasRow>
          <HRow>
            <HBtn><I w={5} h={9}><path d="M5 0v9L0 4.500z" fill="#666" /></I></HBtn>
            <HThumb />
            <HTrack />
            <HBtn><I w={5} h={9}><path d="M0 0v9l5-4.500z" fill="#666" /></I></HBtn>
          </HRow>
        </RightCol>
      </Work>

      <Status>
        <StatusSide>
          <StatusText $w={90} $ml={10} $ls={0.2}>Slide 2 of 2</StatusText>
          <StatusIcon $w={18}><CheckBookIc /></StatusIcon>
          <StatusText $w={150} $ml={21}>English (United States)</StatusText>
          <StatusIcon $w={20}><AccessIc /></StatusIcon>
          <StatusText $w={150} $ml={2}>Accessibility: Unavailable</StatusText>
        </StatusSide>
        <StatusSide>
          <StatusIcon $w={16}><NotesIc /></StatusIcon>
          <StatusText $w={60} $ml={5}>Notes</StatusText>
          <StatusIcon $w={18}><CommentIc /></StatusIcon>
          <StatusText $w={85} $ml={4}>Comments</StatusText>
          <ViewBtn $on><NormalIc /></ViewBtn>
          <ViewBtn $ml={-1}><SorterIc /></ViewBtn>
          <ViewBtn><ReadIc /></ViewBtn>
          <ViewBtn><ShowIc /></ViewBtn>
          <StatusIcon $w={10} $ml={8}><I w={9} h={1}><path d="M0 .5h9" stroke="#555" /></I></StatusIcon>
          <ZoomTrack><ZoomThumb /></ZoomTrack>
          <StatusIcon $w={11} $ml={5}><I w={11}><path d="M0 5.500h11M5.500 0v11" stroke="#555" /></I></StatusIcon>
          <StatusText $w={45} $ml={17}>100%</StatusText>
          <StatusIcon $w={16}><FitIc /></StatusIcon>
          <StatusIcon $w={10} />
        </StatusSide>
      </Status>
    </Page>
  );
}
